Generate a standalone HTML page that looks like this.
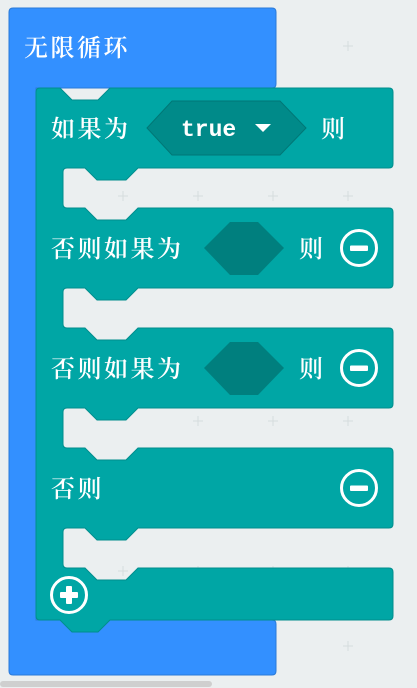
<!DOCTYPE html>
<html><head><meta charset="utf-8"><style>
html,body{margin:0;padding:0;width:417px;height:688px;overflow:hidden;background:#ebeff0}
svg{display:block}
text{font-family:"Liberation Serif","Noto Serif CJK SC",serif;font-weight:600;fill:#fff;font-size:24px;letter-spacing:2.5px}
</style></head><body>
<svg width="417" height="688" viewBox="0 0 417 688">
<g stroke="#d6dcde" stroke-width="1">
<path d="M343,46h10M348,41v10M118,196h10M123,191v10M193,196h10M198,191v10M268,196h10M273,191v10M343,196h10M348,191v10M193,421h10M198,416v10M268,421h10M273,416v10M343,421h10M348,416v10M118,571h10M123,566v10M193,571h10M198,566v10M268,571h10M273,566v10M343,571h10M348,566v10M343,646h10M348,641v10"/>
</g>
<path d="M13,8 H272 Q276,8 276,12 V84 Q276,88 272,88 H36 V620 H272 Q276,620 276,624 V671 Q276,675 272,675 H13 Q9,675 9,671 V12 Q9,8 13,8Z" fill="#3390ff" stroke="#2a7ad8" stroke-width="1"/>
<path d="M40,88 H60 L72,100 H98 L110,88 H389 Q393,88 393,92 V164 Q393,168 389,168 H138 L126,180 H97 L85,168 H67 Q63,168 63,172 V204 Q63,208 67,208 H85 L97,220 H126 L138,208 H389 Q393,208 393,212 V284 Q393,288 389,288 H138 L126,300 H97 L85,288 H67 Q63,288 63,292 V324 Q63,328 67,328 H85 L97,340 H126 L138,328 H389 Q393,328 393,332 V404 Q393,408 389,408 H138 L126,420 H97 L85,408 H67 Q63,408 63,412 V444 Q63,448 67,448 H85 L97,460 H126 L138,448 H389 Q393,448 393,452 V524 Q393,528 389,528 H138 L126,540 H97 L85,528 H67 Q63,528 63,532 V564 Q63,568 67,568 H85 L97,580 H126 L138,568 H389 Q393,568 393,572 V616 Q393,620 389,620 H110 L98,632 H72 L60,620 H40 Q36,620 36,616 V92 Q36,88 40,88 Z" fill="#00a6a5" stroke="#008e8d" stroke-width="1"/>
<text x="24" y="56">无限循环</text>
<text x="51" y="137">如果为</text>
<polygon points="147,128 172,101 280,101 306,128 280,155 172,155" fill="#008a89" stroke="#007776" stroke-width="1"/>
<text x="181" y="136" style="font-family:'Liberation Mono','DejaVu Sans Mono',monospace;font-weight:bold;font-size:23px;letter-spacing:0">true</text>
<path d="M255,124 h16 l-8,8z" fill="#fff"/>
<text x="321" y="137">则</text>
<text x="51" y="257">否则如果为</text>
<polygon points="204,248 230,222 258,222 284,248 258,275 230,275" fill="#007f7e"/>
<text x="299" y="257">则</text>
<text x="51" y="377">否则如果为</text>
<polygon points="204,368 230,342 258,342 284,368 258,395 230,395" fill="#007f7e"/>
<text x="299" y="377">则</text>
<text x="51" y="497">否则</text>
<g fill="none" stroke="#fff" stroke-width="3">
<circle cx="359" cy="248" r="17.5"/><circle cx="359" cy="368" r="17.5"/><circle cx="359" cy="488" r="17.5"/><circle cx="69" cy="595" r="17.5"/>
</g>
<g fill="#fff">
<rect x="350" y="245.5" width="18" height="5.5" rx="1"/>
<rect x="350" y="365.5" width="18" height="5.5" rx="1"/>
<rect x="350" y="485.5" width="18" height="5.5" rx="1"/>
<rect x="60" y="592" width="18" height="6" rx="1"/>
<rect x="66" y="586" width="6" height="18" rx="1"/>
</g>
<rect x="0" y="681" width="212" height="6" rx="3" fill="#cfcfcf"/>
</svg>
</body></html>
